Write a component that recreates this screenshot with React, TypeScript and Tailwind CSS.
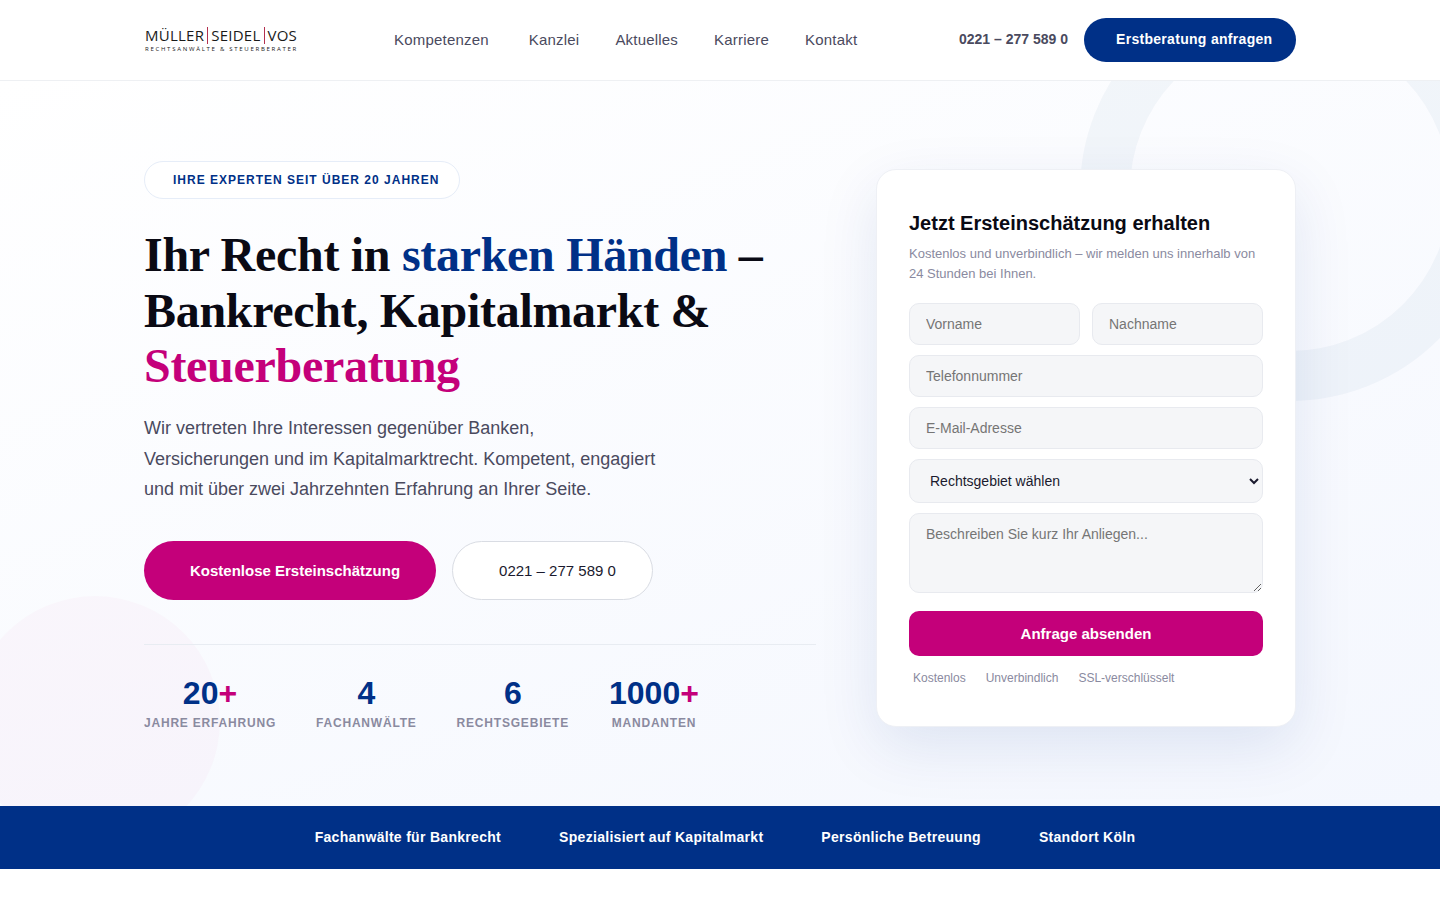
import React from 'react';

const navLinks = ['Kanzlei', 'Aktuelles', 'Karriere', 'Kontakt'];

const stats = [
    { value: '20', plus: true, label: 'Jahre Erfahrung' },
    { value: '4', plus: false, label: 'Fachanwälte' },
    { value: '6', plus: false, label: 'Rechtsgebiete' },
    { value: '1000', plus: true, label: 'Mandanten' },
];

const trustItems = ['Fachanwälte für Bankrecht', 'Spezialisiert auf Kapitalmarkt', 'Persönliche Betreuung', 'Standort Köln'];

const fieldClass =
    'w-full h-[42px] bg-[#f5f6f8] border border-[#e8eaef] rounded-[10px] px-4 text-[14px] text-[#1a1a2e] placeholder:text-[#757575] outline-none';

const Logo: React.FC = () => (
    <div className="w-[153px] ml-px pb-[2px] font-['Open_Sans',sans-serif] text-[#1a1a1a] leading-none">
        <div className="flex items-center text-[15px] tracking-[0.25px] whitespace-nowrap">
            <span>MÜLLER</span>
            <span className="w-px h-[17px] bg-[#b3304f] mx-[3px]" />
            <span>SEIDEL</span>
            <span className="w-px h-[17px] bg-[#b3304f] mx-[3px]" />
            <span>VOS</span>
        </div>
        <div className="mt-[2px] text-[6px] tracking-[1.72px] whitespace-nowrap">
            RECHTSANWÄLTE &amp; STEUERBERATER
        </div>
    </div>
);

const Header: React.FC = () => (
    <header className="h-[81px] bg-white border-b border-[#eef0f3]">
        <div className="w-[1152px] h-20 mx-auto flex items-center">
            <Logo />
            <nav className="ml-[96px] flex items-center gap-9 text-[15px] tracking-[0.2px] text-[#4a4a5e]">
                <a className="mr-1">Kompetenzen</a>
                {navLinks.map((link) => (
                    <a key={link}>{link}</a>
                ))}
            </nav>
            <div className="ml-auto flex items-center gap-4">
                <span className="pb-[2px] text-[14px] font-bold text-[#4a4a5e]">0221 – 277 589 0</span>
                <button className="w-[212px] h-11 pl-8 pr-6 pb-[2px] rounded-[22px] bg-[#003087] text-white text-[14px] font-bold tracking-[0.3px] whitespace-nowrap">
                    Erstberatung anfragen
                </button>
            </div>
        </div>
    </header>
);

const LeadForm: React.FC = () => (
    <form className="relative bg-white border border-[#eef0f5] rounded-[20px] px-8 py-10 shadow-[0_20px_60px_rgba(0,48,135,0.1)]">
        <h2 className="text-[20px] leading-[26px] font-bold text-[#0a0a14]">Jetzt Ersteinschätzung erhalten</h2>
        <p className="mt-[8px] text-[13px] leading-[20px] text-[#8a8aa0]">
            Kostenlos und unverbindlich – wir melden uns innerhalb von 24 Stunden bei Ihnen.
        </p>
        <div className="mt-[19px] flex flex-col gap-[10px]">
            <div className="grid grid-cols-2 gap-3">
                <input className={fieldClass} placeholder="Vorname" />
                <input className={fieldClass} placeholder="Nachname" />
            </div>
            <input className={fieldClass} placeholder="Telefonnummer" />
            <input className={fieldClass} placeholder="E-Mail-Adresse" />
            <select
                defaultValue=""
                className="w-full h-11 bg-[#f5f6f8] border border-[#e8eaef] rounded-[10px] px-4 text-[14px] text-[#1a1a2e] outline-none [appearance:auto]"
            >
                <option value="">Rechtsgebiet wählen</option>
            </select>
            <textarea
                className="block w-full h-20 bg-[#f5f6f8] border border-[#e8eaef] rounded-[10px] px-4 py-[12px] text-[14px] leading-4 text-[#1a1a2e] placeholder:text-[#757575] outline-none resize-y"
                placeholder="Beschreiben Sie kurz Ihr Anliegen..."
            />
        </div>
        <button type="button" className="mt-[18px] w-full h-[45px] pt-[2px] rounded-[10px] bg-[#c4007a] text-white text-[15px] font-bold">
            Anfrage absenden
        </button>
        <div className="mt-[14px] ml-1 flex gap-5 text-[12px] leading-[16px] text-[#8a8aa0]">
            <span>Kostenlos</span>
            <span>Unverbindlich</span>
            <span>SSL-verschlüsselt</span>
        </div>
    </form>
);

const Hero: React.FC = () => (
    <section className="relative h-[725px] overflow-hidden bg-[linear-gradient(160deg,#ffffff_0%,#f4f7fe_100%)]">
        <div className="absolute top-[-100px] right-[-60px] w-[420px] h-[420px] rounded-full border-[50px] border-[rgba(0,70,130,0.04)]" />
        <div className="absolute bottom-[-40px] left-[-30px] w-[250px] h-[250px] rounded-full bg-[rgba(196,0,122,0.025)]" />
        <div className="relative w-[1152px] mx-auto grid grid-cols-[1fr_420px] gap-[60px]">
            <div className="pt-20">
                <div className="inline-flex items-center h-[38px] pl-7 pr-5 bg-white border border-[#e6edf8] rounded-full text-[12px] font-bold tracking-[1px] text-[#003087] uppercase">
                    Ihre Experten seit über 20 Jahren
                </div>
                <h1 className="mt-[28px] font-['Liberation_Serif',serif] text-[48px] leading-[55.68px] tracking-[-0.3px] font-bold text-[#0a0a14]">
                    Ihr Recht in <span className="text-[#003087]">starken Händen</span> –<br />
                    Bankrecht, Kapitalmarkt &amp;
                    <br />
                    <span className="text-[#c4007a]">Steuerberatung</span>
                </h1>
                <p className="mt-[19px] max-w-[520px] text-[18px] leading-[30.6px] text-[#4a4a5e]">
                    Wir vertreten Ihre Interessen gegenüber Banken, Versicherungen und im Kapitalmarktrecht. Kompetent,
                    engagiert und mit über zwei Jahrzehnten Erfahrung an Ihrer Seite.
                </p>
                <div className="mt-[36.2px] flex gap-4">
                    <button className="h-[59px] pl-[46px] pr-9 pt-[2px] rounded-full bg-[#c4007a] text-white text-[15px] font-bold">
                        Kostenlose Ersteinschätzung
                    </button>
                    <button className="h-[59px] pl-[46px] pr-9 pt-[2px] rounded-full bg-white border border-[#d9dce3] text-[#1a1a2e] text-[15px]">
                        0221 – 277 589 0
                    </button>
                </div>
                <div className="mt-11 pt-[32px] border-t border-[#e8ecf2] flex gap-10">
                    {stats.map((stat) => (
                        <div key={stat.label} className="text-center">
                            <div className="text-[32px] leading-[32px] font-bold text-[#003087]">
                                {stat.value}
                                {stat.plus && <span className="text-[#c4007a]">+</span>}
                            </div>
                            <div className="mt-[6px] text-[12px] leading-[16px] font-bold tracking-[0.8px] uppercase text-[#8a8aa0]">
                                {stat.label}
                            </div>
                        </div>
                    ))}
                </div>
            </div>
            <div className="pt-[88px]">
                <LeadForm />
            </div>
        </div>
    </section>
);

const TrustBar: React.FC = () => (
    <div className="h-[63px] pl-[10px] bg-[#003087] flex items-center justify-center gap-[58px] text-white text-[14px] font-bold tracking-[0.3px]">
        {trustItems.map((item) => (
            <span key={item}>{item}</span>
        ))}
    </div>
);

export default function App() {
    return (
        <div className="min-h-[900px] bg-white font-['Liberation_Sans',Arial,sans-serif]">
            <Header />
            <Hero />
            <TrustBar />
        </div>
    );
}
